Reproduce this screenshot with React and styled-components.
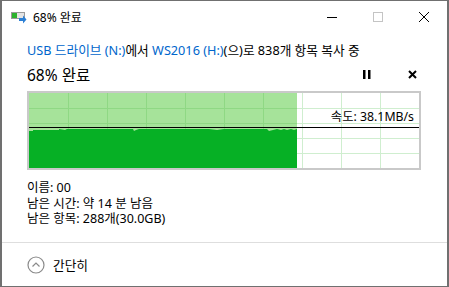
import React from 'react';
import styled, { createGlobalStyle } from 'styled-components';

const GlobalStyle = createGlobalStyle`
    html, body {
        margin: 0;
        padding: 0;
        background: #ffffff;
    }
    body {
        font-family: "Noto Sans", "Noto Sans CJK KR", sans-serif;
        color: #000;
    }
`;

const Window = styled.div`
    width: 449px;
    height: 287px;
    box-sizing: border-box;
    border: 1px solid #707070;
    border-left-width: 2px;
    border-right-width: 2px;
    background: #fff;
    display: flex;
    flex-direction: column;
`;

const TitleBar = styled.div`
    height: 31px;
    display: flex;
    align-items: center;
    padding-left: 8px;
`;

const TitleText = styled.span`
    font-size: 12px;
    margin-left: 6px;
    flex: 1;
`;

const WinButton = styled.div`
    width: 46px;
    height: 31px;
    display: flex;
    align-items: center;
    justify-content: center;
`;

const Body = styled.div`
    padding: 9px 25px 0 25px;
    display: flex;
    flex-direction: column;
`;

const Subtitle = styled.div`
    font-size: 12.7px;
    line-height: 18px;
    white-space: nowrap;
`;

const Link = styled.span`
    color: #0066cc;
`;

const HeaderRow = styled.div`
    display: flex;
    align-items: center;
    height: 26px;
    margin-top: 2px;
`;

const Percent = styled.div`
    font-size: 15.5px;
    flex: 1;
`;

const IconButton = styled.div`
    width: 20px;
    height: 20px;
    display: flex;
    align-items: center;
    justify-content: center;
    margin-left: ${props => props.gap || 0}px;
`;

const Chart = styled.div`
    position: relative;
    margin-top: 4px;
    width: 394px;
    height: 79px;
    box-sizing: border-box;
    border: 2px solid #c9c9c9;
`;

const SpeedLabel = styled.div`
    position: absolute;
    right: 5px;
    top: 17px;
    font-size: 12.3px;
    line-height: 14px;
`;

const Info = styled.div`
    margin-top: 10px;
    font-size: 12.5px;
    line-height: 15.5px;
`;

const Footer = styled.div`
    margin-top: auto;
    height: 43px;
    border-top: 1px solid #dedede;
    display: flex;
    align-items: center;
    padding-left: 25px;
    gap: 8px;
    font-size: 12.7px;
`;

const W = 390;
const H = 75;
const progressX = 268;

const topPoints = [
    [0, 38], [4, 38], [4, 37], [30, 37], [30, 36], [36, 37], [38, 36], [104, 36], [105, 38], [107, 37],
    [110, 36], [180, 36], [188, 37], [195, 36], [238, 36], [240, 38], [244, 37], [248, 36], [252, 37],
    [255, 36], [258, 37], [262, 36], [265, 37], [268, 36]
];

const ProgressChart = () => {
    const cols = [];
    for (let x = 39; x < W; x += 39) cols.push(x);
    const rows = [15, 30, 45, 60];
    const topPath = topPoints.map((p, i) => `${i ? 'L' : 'M'}${p[0]} ${p[1]}`).join(' ') + ` L${progressX} ${H} L0 ${H} Z`;

    return (
        <svg width={W} height={H} style={{ display: 'block' }}>
            <rect x="0" y="0" width={W} height={H} fill="#ffffff" />
            {cols.map(x => (
                <line key={'w' + x} x1={x + 0.5} y1="0" x2={x + 0.5} y2={H} stroke="#cfeecf" />
            ))}
            {rows.map(y => (
                <line key={'h' + y} x1={progressX} y1={y + 0.5} x2={W} y2={y + 0.5} stroke="#cfeecf" />
            ))}
            <rect x="0" y="0" width={progressX} height={H} fill="#a6e39a" />
            {cols.filter(x => x < progressX).map(x => (
                <line key={'g' + x} x1={x + 0.5} y1="0" x2={x + 0.5} y2={H} stroke="#8fd884" />
            ))}
            {rows.map(y => (
                <line key={'r' + y} x1="0" y1={y + 0.5} x2={progressX} y2={y + 0.5} stroke="#8fd884" />
            ))}
            <path d={topPath} fill="#06b025" />
            <line x1="0" y1="34.5" x2={W} y2="34.5" stroke="#000" strokeWidth="1" />
        </svg>
    );
};

const CopyIcon = () => (
    <svg width="17" height="14" viewBox="0 0 17 14">
        <rect x="1.5" y="2.5" width="13" height="6" fill="#e4e4e4" stroke="#9a9a9a" />
        <rect x="2" y="3" width="5" height="5" fill="#2cb22c" />
        <path d="M9 8 H13 V5.5 L16.5 9.5 L13 13.5 V11 H9 Z" fill="#2b7fd4" />
    </svg>
);

const App = () => {
    return (
        <>
            <GlobalStyle />
            <Window>
                <TitleBar>
                    <CopyIcon />
                    <TitleText>68% 완료</TitleText>
                    <WinButton>
                        <svg width="10" height="10"><line x1="0" y1="5.5" x2="10" y2="5.5" stroke="#000" /></svg>
                    </WinButton>
                    <WinButton>
                        <svg width="10" height="10"><rect x="0.5" y="0.5" width="9" height="9" fill="none" stroke="#c4c4c4" /></svg>
                    </WinButton>
                    <WinButton>
                        <svg width="10" height="10"><path d="M0 0 L10 10 M10 0 L0 10" stroke="#000" strokeWidth="1" /></svg>
                    </WinButton>
                </TitleBar>
                <Body>
                    <Subtitle>
                        <Link>USB 드라이브 (N:)</Link>에서 <Link>WS2016 (H:)</Link>(으)로 838개 항목 복사 중
                    </Subtitle>
                    <HeaderRow>
                        <Percent>68% 완료</Percent>
                        <IconButton>
                            <svg width="8" height="9"><rect x="0" y="0" width="2.5" height="9" fill="#000" /><rect x="5" y="0" width="2.5" height="9" fill="#000" /></svg>
                        </IconButton>
                        <IconButton gap={25}>
                            <svg width="9" height="9"><path d="M1 1 L8 8 M8 1 L1 8" stroke="#000" strokeWidth="2" /></svg>
                        </IconButton>
                    </HeaderRow>
                    <Chart>
                        <ProgressChart />
                        <SpeedLabel>속도: 38.1MB/s</SpeedLabel>
                    </Chart>
                    <Info>
                        <div>이름: 00</div>
                        <div>남은 시간: 약 14 분 남음</div>
                        <div>남은 항목: 288개(30.0GB)</div>
                    </Info>
                </Body>
                <Footer>
                    <svg width="18" height="18" viewBox="0 0 18 18">
                        <circle cx="9" cy="9" r="8" fill="none" stroke="#8a8a8a" strokeWidth="1.2" />
                        <path d="M5.5 10.5 L9 7 L12.5 10.5" fill="none" stroke="#8a8a8a" strokeWidth="1.2" />
                    </svg>
                    <span>간단히</span>
                </Footer>
            </Window>
        </>
    );
};

export default App;
